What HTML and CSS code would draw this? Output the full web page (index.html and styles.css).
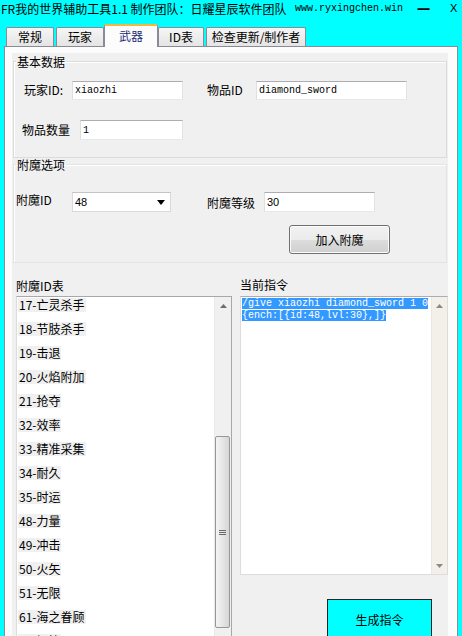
FILE: index.html
```html
<!DOCTYPE html>
<html lang="zh-CN">
<head>
  <meta charset="UTF-8" />
  <title>FR我的世界辅助工具1.1</title>
  <link rel="stylesheet" href="styles.css">
</head>
<body>

<div class="titlebar">
  <span class="title">FR我的世界辅助工具1.1 制作团队：日耀星辰软件团队</span>
  <span class="site">www.ryxingchen.win</span>
  <span class="ctl ctl-shrink">一</span>
  <span class="ctl ctl-x">X</span>
</div>

<div class="tabs">
  <div class="tab t-normal">常规</div>
  <div class="tab t-player">玩家</div>
  <div class="tab t-weapon active">武器</div>
  <div class="tab t-ids">ID表</div>
  <div class="tab t-update">检查更新/制作者</div>
</div>

<div class="panel">
  <div class="page">

    <fieldset class="group basic">
      <legend>基本数据</legend>
      <div class="row r1">
        <label class="lbl l-player">玩家ID:</label>
        <input class="txt mono w-player" value="xiaozhi" readonly>
        <label class="lbl l-item">物品ID</label>
        <input class="txt mono w-item" value="diamond_sword" readonly>
      </div>
      <div class="row r2">
        <label class="lbl l-count">物品数量</label>
        <input class="txt mono w-count" value="1" readonly>
      </div>
    </fieldset>

    <fieldset class="group enchant">
      <legend>附魔选项</legend>
      <div class="row r3">
        <label class="lbl l-ench">附魔ID</label>
        <div class="combo">
          <span>48</span>
          <svg width="8" height="5" viewBox="0 0 8 5"><polygon points="0,0 8,0 4,5" fill="#000"/></svg>
        </div>
        <label class="lbl l-level">附魔等级</label>
        <input class="txt sans w-level" value="30" readonly>
      </div>
      <div class="row r4">
        <button class="btn add">加入附魔</button>
      </div>
    </fieldset>

    <div class="bottom">
      <div class="col-list">
        <div class="cap">附魔ID表</div>
        <div class="listbox">
          <div class="items">
            <div class="item"><span>17-亡灵杀手</span></div>
            <div class="item"><span>18-节肢杀手</span></div>
            <div class="item"><span>19-击退</span></div>
            <div class="item"><span>20-火焰附加</span></div>
            <div class="item"><span>21-抢夺</span></div>
            <div class="item"><span>32-效率</span></div>
            <div class="item"><span>33-精准采集</span></div>
            <div class="item"><span>34-耐久</span></div>
            <div class="item"><span>35-时运</span></div>
            <div class="item"><span>48-力量</span></div>
            <div class="item"><span>49-冲击</span></div>
            <div class="item"><span>50-火矢</span></div>
            <div class="item"><span>51-无限</span></div>
            <div class="item"><span>61-海之眷顾</span></div>
            <div class="item"><span>62-饵钓</span></div>
          </div>
          <div class="vscroll">
            <div class="arrow">
              <svg width="7" height="4" viewBox="0 0 7 4"><polygon points="0,4 7,4 3.5,0" fill="#6d6d6d"/></svg>
            </div>
            <div class="track">
              <div class="thumb">
                <svg width="7" height="7" viewBox="0 0 7 7"><path d="M0 1.5H7M0 3.5H7M0 5.5H7" stroke="#6a6a6a" stroke-width="1"/></svg>
              </div>
            </div>
          </div>
        </div>
      </div>

      <div class="col-cmd">
        <div class="cap cmd-cap">当前指令</div>
        <div class="cmdbox">
          <div class="cmdtext">
            <span class="sel">/give xiaozhi diamond_sword 1 0</span><br>
            <span class="sel">{ench:[{id:48,lvl:30},]}</span>
          </div>
          <div class="vscroll thin">
            <div class="arrow">
              <svg width="7" height="4" viewBox="0 0 7 4"><polygon points="0,4 7,4 3.5,0" fill="#8a8a8a"/></svg>
            </div>
            <div class="arrow">
              <svg width="7" height="4" viewBox="0 0 7 4"><polygon points="0,0 7,0 3.5,4" fill="#8a8a8a"/></svg>
            </div>
          </div>
        </div>
        <button class="btn gen">生成指令</button>
      </div>
    </div>

  </div>
</div>

</body>
</html>
```

FILE: styles.css
```css
body { margin: 0; width: 462px; height: 636px; overflow: hidden; background: #00ffff; color: #000; font: 12px/1.2 "Noto Sans CJK SC", "Liberation Sans", sans-serif; }

/* title bar */
.titlebar { display: flex; align-items: flex-start; height: 24px; padding: 1px 0 0 1px; box-sizing: border-box; white-space: nowrap; line-height: 15px; }
.title { flex: none; width: 294px; }
.site { flex: none; font: 10px/15px "Liberation Mono", monospace; }
.ctl { flex: none; color: #000; }
.ctl-shrink { width: 13px; margin-left: 14px; font: 700 13px/15px "Noto Sans CJK SC", sans-serif; }
.ctl-x { margin-left: 20px; font: 11px/15px "Liberation Sans", sans-serif; }

/* tabs */
.tabs { display: flex; align-items: flex-end; gap: 2px; height: 22px; padding-left: 6px; }
.tab { height: 19px; box-sizing: border-box; border: 1px solid #898c95; border-bottom: 0; border-radius: 2px 2px 0 0; background: linear-gradient(#f6f6f6, #e4e4e4); text-align: center; line-height: 18px; }
.t-normal { width: 48px; }
.t-player { width: 48px; }
.t-weapon { width: 54px; }
.t-ids { width: 46px; }
.t-update { width: 100px; }
.tab.active { position: relative; z-index: 1; height: 23px; margin: 0 -2px -1px; border-top: 2px solid #f4b740; background: #fcfcfc; color: #1c2a78; line-height: 20px; }

/* panel */
.panel { width: 454px; height: 590px; margin-left: 4px; box-sizing: border-box; border: 1px solid #898c95; border-bottom: 0; background: #fcfcfc; padding: 6px 9px 0 7px; }
.page { height: 100%; box-sizing: border-box; padding-top: 2px; background: #f0f0f0; overflow: hidden; }

/* group boxes */
.group { width: 434px; margin: 0 0 0 1px; padding: 0; box-sizing: border-box; border: 1px solid #dcdcdc; box-shadow: inset 1px 1px 0 #fff; }
.group legend { margin-left: 2px; padding: 0 1px; line-height: 13px; }
.basic { padding-bottom: 17px; }
.enchant { padding-bottom: 8px; border-color: #e4e4e4; }

.row { display: flex; align-items: center; }
.r1 { height: 19px; margin-top: 13px; }
.r2 { height: 20px; margin-top: 20px; }
.r3 { height: 20px; margin-top: 21px; }
.r4 { margin-top: 13px; }

.lbl { flex: none; white-space: nowrap; }
.l-player { width: 48px; margin-left: 10px; }
.l-item { width: 49px; margin-left: 24px; }
.l-count { width: 58px; margin-left: 8px; }
.l-ench { width: 56px; margin-left: 2px; margin-top: -4px; }
.l-level { width: 57px; margin-left: 36px; margin-top: 3px; }

.txt { flex: none; margin: 0; padding: 0 2px; box-sizing: border-box; background: #fff; color: #000; border: 1px solid; border-color: #abadb3 #e2e3ea #e3e9ef #dbdfe6; outline: none; }
.mono { font: 10px "Liberation Mono", monospace; }
.sans { font: 11px "Liberation Sans", sans-serif; }
.w-player { width: 111px; height: 19px; }
.w-item { width: 151px; height: 19px; }
.w-count { width: 103px; height: 20px; }
.w-level { width: 111px; height: 20px; }

.combo { flex: none; display: flex; align-items: center; justify-content: space-between; width: 99px; height: 20px; box-sizing: border-box; padding: 0 5px 0 2px; background: #fff; border: 1px solid #d9d9d9; border-top-color: #c4c4c4; font: 11px "Liberation Sans", sans-serif; }

.btn { font: 12px "Noto Sans CJK SC", sans-serif; color: #000; padding: 0; }
.add { width: 101px; height: 29px; margin-left: 275px; border: 1px solid #707070; border-radius: 3px; background: linear-gradient(#f2f2f2 0%, #ebebeb 50%, #dddddd 50%, #cfcfcf 100%); box-shadow: inset 0 0 0 1px #fbfbfb; }

/* bottom area */
.bottom { display: flex; margin-top: 16px; padding-left: 4px; }
.cap { line-height: 13px; }
.col-list { width: 216px; }
.listbox { display: flex; height: 345px; margin-top: 4px; background: #fff; border: 1px solid #a8a8a8; border-left-color: #dcdcdc; overflow: hidden; }
.items { flex: 1; margin-top: -4px; }
.item { display: flex; align-items: center; height: 24px; padding-left: 1px; white-space: nowrap; }
.item span { background: #f0f0f0; line-height: 14px; padding: 0 1px; }

.vscroll { flex: none; display: flex; flex-direction: column; width: 17px; background: #f0f0f0; border-left: 1px solid #e8e8e8; box-sizing: border-box; }
.arrow { display: flex; align-items: center; justify-content: center; height: 17px; }
.track { flex: 1; padding-top: 122px; }
.thumb { display: flex; align-items: center; justify-content: center; width: 15px; height: 192px; box-sizing: border-box; border: 1px solid #979797; border-radius: 2px; background: linear-gradient(to right, #f4f4f4, #e6e6e6 50%, #d6d6d6); }

.col-cmd { width: 208px; margin-left: 8px; }
.cmd-cap { margin-top: -1px; }
.cmdbox { display: flex; height: 279px; margin-top: 5px; box-sizing: border-box; background: #fff; border: 1px solid #dcdcdc; border-top-color: #abadb3; }
.cmdtext { flex: 1; padding: 1px 0 0 1px; font: 10px/12px "Liberation Mono", monospace; white-space: nowrap; overflow: hidden; }
.sel { background: #3399ff; color: #fff; }
.vscroll.thin { width: 16px; justify-content: space-between; background: #f3efe9; border-left-color: #ece6de; }

.gen { display: block; width: 105px; height: 40px; margin: 24px 0 0 87px; background: #00ffff; border: 1px solid #222; }
```
